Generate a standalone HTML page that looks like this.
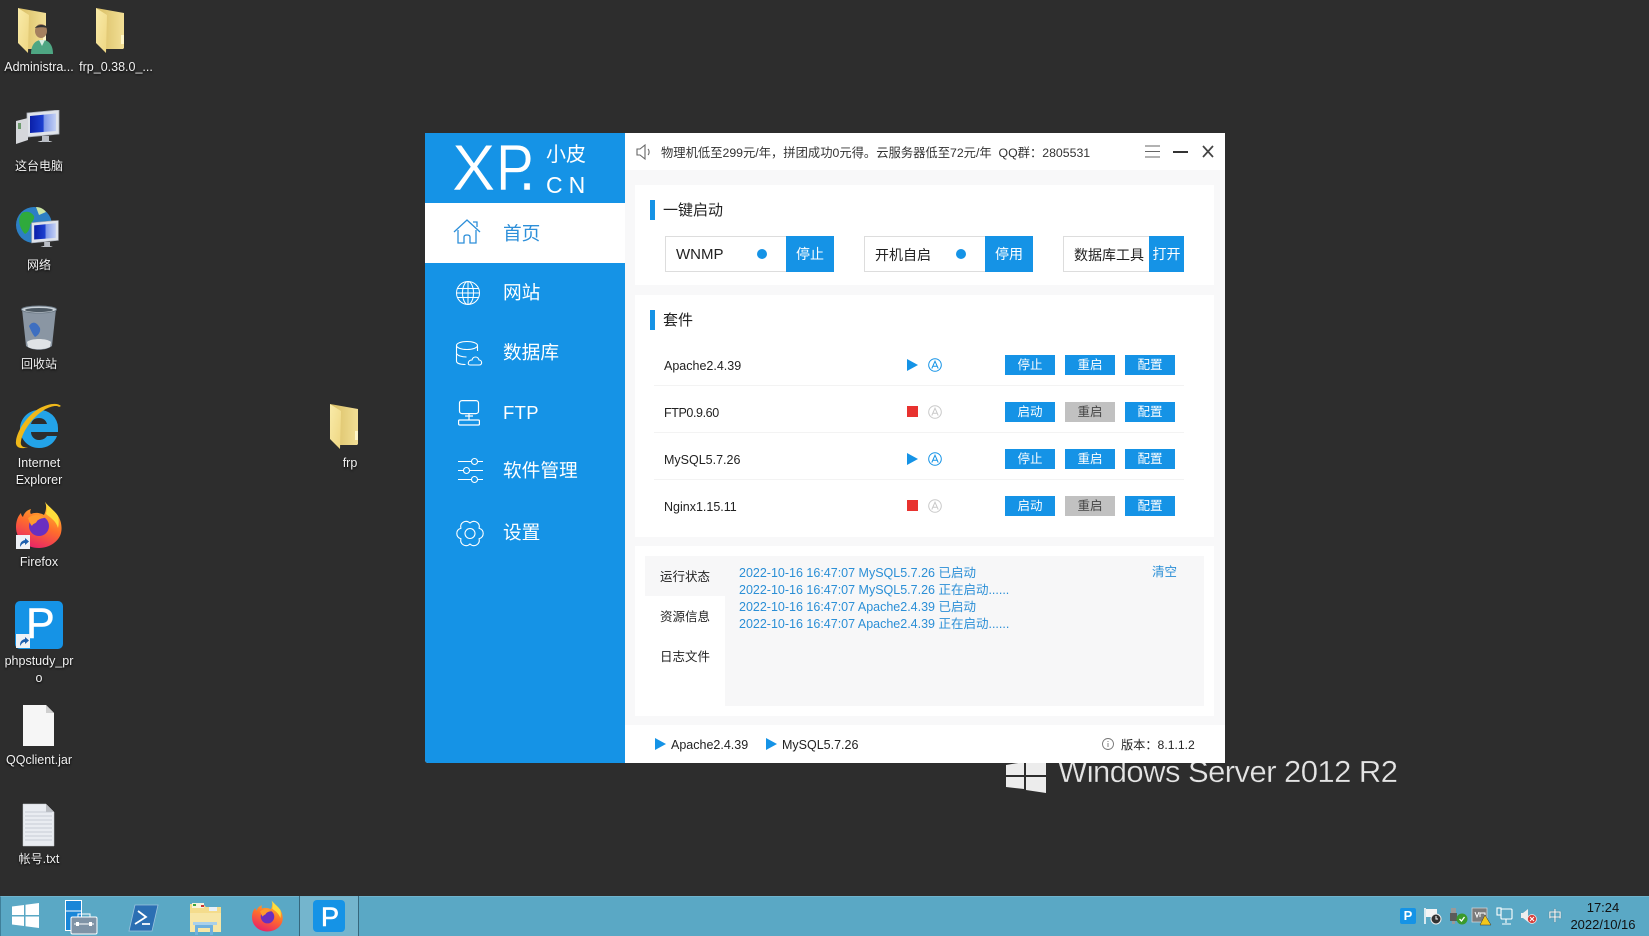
<!DOCTYPE html>
<html><head><meta charset="utf-8"><title>phpstudy</title>
<style>
*{box-sizing:border-box;margin:0;padding:0}
html,body{width:1649px;height:936px;overflow:hidden;background:#2d2d2d}
body{position:relative;font-family:"Liberation Sans","Noto Sans CJK SC",sans-serif;color:#222}
.a{position:absolute}
svg{position:absolute;overflow:visible}
.l{position:absolute;width:90px;text-align:center;color:#f2f2f2;font-size:12.500px;line-height:17px;text-shadow:0 1px 2px #000;white-space:nowrap}
.c{font-size:12px}
#win{position:absolute;left:425px;top:133px;width:800px;height:630px;background:#f8f8f9;overflow:hidden;border-radius:0 0 0 3px}
#side{position:absolute;left:0;top:0;width:200px;height:630px;background:#1593e6}
.nav{position:absolute;left:78px;font-size:18.700px;line-height:26px;color:#fff;white-space:nowrap}
.panel{position:absolute;background:#fff;left:210px;width:579px}
.bar{position:absolute;width:5px;height:20px;background:#1593e6}
.ttl{position:absolute;font-size:15px;line-height:20px;color:#222}
.box{position:absolute;height:36px;background:#fff;border:1px solid #ddd;font-size:14px;line-height:36px;color:#222;white-space:nowrap}
.bb{position:absolute;top:-1px;height:36px;background:#1593e6;color:#fff;text-align:center;font-size:14px;line-height:36px}
.dot{position:absolute;width:10px;height:10px;border-radius:50%;background:#1593e6;top:12px}
.n{position:absolute;left:664px;font-size:12.500px;line-height:20px;color:#222;white-space:nowrap}
.btn{position:absolute;width:50px;height:20px;background:#1593e6;color:#fff;text-align:center;font-size:12.500px;line-height:20px}
.off{background:#c1c1c1;color:#444}
.sep{position:absolute;left:229px;width:530px;height:1px;background:#f3f3f3}
.log{position:absolute;left:739px;font-size:12.500px;line-height:17px;color:#2b8fd6;white-space:nowrap}
.tab{position:absolute;left:645px;width:80px;text-align:center;font-size:12.500px;line-height:20px;color:#222}
.ft{position:absolute;top:735px;font-size:12.500px;line-height:20px;color:#222;white-space:nowrap}
.xp{position:absolute;top:0;font-size:65px;line-height:70px;color:#fff;-webkit-text-stroke:.5px #1593e6;transform-origin:0 0;white-space:nowrap}
</style></head><body>

<svg width="0" height="0" style="position:absolute"><defs>
<linearGradient id="fb" x1="0" y1="0" x2="1" y2="0"><stop offset="0" stop-color="#d8bd62"/><stop offset="1" stop-color="#f2df96"/></linearGradient>
<linearGradient id="fl" x1="0" y1="0" x2="1" y2="1"><stop offset="0" stop-color="#f9eba9"/><stop offset="1" stop-color="#eed682"/></linearGradient>
<linearGradient id="scr" x1="0" y1="0" x2="1" y2="0"><stop offset="0" stop-color="#0a1fa8"/><stop offset=".5" stop-color="#1c3fd0"/><stop offset=".55" stop-color="#7f98e8"/><stop offset="1" stop-color="#c3d0f5"/></linearGradient>
<linearGradient id="fx" x1="0.7" y1="0" x2="0.3" y2="1"><stop offset="0" stop-color="#ffc62e"/><stop offset=".5" stop-color="#ff6d2c"/><stop offset="1" stop-color="#e8206a"/></linearGradient>
<symbol id="folder" viewBox="0 0 30 46"><path d="M0 0L28 5V40L27 41H9L0 33Z" fill="url(#fb)"/><path d="M28 27h-3v9h3z" fill="#fff6c8"/><path d="M0 0L11 7L10 45L0 35Z" fill="url(#fl)"/></symbol>
<symbol id="fox" viewBox="0 0 46 46"><path d="M29 0c3 5 9 8 13 14 4 6 4 13 3 17-2 8-11 15-22 15C10 46 0 37 0 25c0-6 2-11 5-14 0 2 1 3 2 4 1-4 4-7 8-8-1 2-1 4 0 5 4-2 10-1 13 1 2-4 3-9 1-13z" fill="url(#fx)"/><circle cx="23" cy="24" r="10" fill="#6a2fc0"/><path d="M12 16c5-4 12-4 17 0-3 0-6 1-8 3-1 3-4 2-5 5-2-2-3-5-4-8z" fill="#ff9a2e"/><path d="M29 0c4 5 10 9 13 14 1 4 1 8 0 12-2-7-7-10-12-14 1-4 1-8-1-12z" fill="#ffdd3c"/></symbol>
<symbol id="sc" viewBox="0 0 14 14"><rect width="14" height="14" fill="#eef1f6"/><path d="M4 12c0-4 1-6 5-7V3l4 3.500-4 3.500V8c-2 0-3 1-5 4z" fill="#1d5fae"/></symbol>
<symbol id="mon" viewBox="0 0 36 32"><path d="M2 3L34 0V24L2 27Z" fill="#dfe3ea" stroke="#a9aeb7" stroke-width=".8"/><path d="M5 6L31 3.500V21L5 23Z" fill="url(#scr)"/><ellipse cx="20" cy="34" rx="9" ry="3.500" fill="#d0d3d8"/><rect x="17" y="26" width="7" height="7" fill="#b9bdc4"/></symbol>
<symbol id="A" viewBox="0 0 14 14"><circle cx="7" cy="7" r="6.300" fill="none" stroke="currentColor" stroke-width="1"/><path d="M3.800 10.500L7 3.200l3.200 7.300M4.900 8.200h4.200" fill="none" stroke="currentColor" stroke-width="1"/></symbol>
</defs></svg>

<!-- Desktop icons -->
<svg style="left:18px;top:8px" width="30" height="46"><use href="#folder" width="30" height="46"/></svg>
<svg style="left:30px;top:24px" width="24" height="30" viewBox="0 0 24 30"><ellipse cx="11" cy="7" rx="6" ry="7" fill="#a5805f"/><path d="M5 4c2-4 11-4 13 0-4-1-9-1-13 0z" fill="#333"/><path d="M1 30c0-9 4-14 11-14s11 5 11 14z" fill="#4ea683"/><path d="M9 16l3 6 3-6z" fill="#d9ede2"/></svg>
<div class="l" style="left:-6px;top:59px">Administra...</div>
<svg style="left:96px;top:8px" width="30" height="46"><use href="#folder" width="30" height="46"/></svg>
<div class="l" style="left:71px;top:59px">frp_0.38.0_...</div>

<svg style="left:25px;top:110px" width="36" height="32"><use href="#mon" width="36" height="32"/></svg>
<svg style="left:16px;top:118px" width="14" height="26" viewBox="0 0 14 26"><path d="M0 3L12 0V22L0 26Z" fill="#d5d7db"/><rect x="2" y="5" width="3" height="6" fill="#6e9a6e"/></svg>
<div class="l c" style="left:-6px;top:158px">这台电脑</div>

<svg style="left:16px;top:205px" width="36" height="40" viewBox="0 0 36 40"><circle cx="18" cy="20" r="18" fill="#2c7fc4"/><path d="M6 8c6-3 10 0 12 3 1 3-2 6-4 9 0 5-3 8-5 9-4-4-9-14-3-21z" fill="#2faa3c"/><path d="M20 2c4 0 8 2 10 5l-7 3z" fill="#cbe6a5"/></svg>
<svg style="left:30px;top:218px" width="30" height="33" viewBox="0 0 36 34"><use href="#mon" width="36" height="32"/></svg>
<div class="l c" style="left:-6px;top:257px">网络</div>

<svg style="left:21px;top:306px" width="36" height="44" viewBox="0 0 36 44"><path d="M1 3h34l-4 37c-6 5-20 5-26 0z" fill="#8a96a3"/><ellipse cx="18" cy="3.500" rx="17.500" ry="3.500" fill="#c9d1d8" stroke="#6f7c88"/><ellipse cx="18" cy="4" rx="14" ry="2" fill="#4c5862"/><path d="M8 20c4-6 8-3 11 2 1 5-3 8-5 9-2-2-4-6-6-11z" fill="#3e6fc0"/><path d="M6 36c4-4 20-4 24 0l-1 5c-6 3-17 3-22 0z" fill="#dfe3e6"/></svg>
<div class="l c" style="left:-6px;top:356px">回收站</div>

<svg style="left:16px;top:403px" width="46" height="46" viewBox="0 0 46 46"><path d="M23 7a18 18 0 0 1 19 18v4H15c0 4 3 8 8 8 3 0 6-1 8-4h10c-3 8-10 12-18 12C12 45 4 36 4 26S12 7 23 7zM15 21h16c-1-4-4-6-8-6s-7 2-8 6z" fill="#23a3e8"/><path d="M45 3C41-1 32 1 24 5 11 12 1 28 0 38c-1 6 4 9 12 6-5 1-8-1-7-6 2-11 13-25 23-31 7-4 13-5 15-3z" fill="#efb81a"/></svg>
<div class="l" style="left:-6px;top:455px">Internet</div>
<div class="l" style="left:-6px;top:472px">Explorer</div>

<svg style="left:330px;top:404px" width="30" height="46"><use href="#folder" width="30" height="46"/></svg>
<div class="l" style="left:305px;top:455px">frp</div>

<svg style="left:16px;top:502px" width="46" height="46"><use href="#fox" width="46" height="46"/></svg>
<svg style="left:16px;top:535px" width="14" height="14"><use href="#sc" width="14" height="14"/></svg>
<div class="l" style="left:-6px;top:554px">Firefox</div>

<div class="a" style="left:15px;top:601px;width:48px;height:48px;background:#1593e6;border-radius:5px"></div>
<div class="a" style="left:26px;top:599px;color:#fff;font-size:43px;line-height:50px;-webkit-text-stroke:.5px #fff">P</div>
<svg style="left:16px;top:634px" width="14" height="14"><use href="#sc" width="14" height="14"/></svg>
<div class="l" style="left:-6px;top:653px">phpstudy_pr</div>
<div class="l" style="left:-6px;top:670px">o</div>

<svg style="left:23px;top:705px" width="32" height="42" viewBox="0 0 32 42"><path d="M0 0H23L31 8V41H0Z" fill="#f6f6f6"/><path d="M23 0L31 8H23Z" fill="#cfcfcf"/></svg>
<div class="l" style="left:-6px;top:752px">QQclient.jar</div>

<svg style="left:23px;top:804px" width="32" height="42" viewBox="0 0 32 42"><path d="M0 0H23L31 8V42H0Z" fill="#e9ecf1" stroke="#c5c8cd" stroke-width=".5"/><path d="M23 0L31 8H23Z" fill="#b9bcc1"/><path d="M2 8h27M2 12h27M2 16h27M2 20h27M2 24h27M2 28h27M2 32h27M2 36h27" stroke="#bcc2cc" stroke-width=".8"/></svg>
<div class="l" style="left:-6px;top:851px"><span class="c">帐号</span>.txt</div>

<!-- Watermark -->
<svg style="left:1006px;top:760px" width="40" height="33" viewBox="0 0 40 33"><path d="M0 5L18 2V15H0ZM20 2L40 0V15H20ZM0 17H18V29L0 27ZM20 17H40V33L20 30Z" fill="#ececec"/></svg>
<div class="a" style="left:1058px;top:752px;font-size:31px;line-height:40px;color:#e4e4e4;white-space:nowrap;letter-spacing:-.55px;-webkit-text-stroke:.3px #2d2d2d">Windows Server 2012 R2</div>

<!-- Window -->
<div id="win">
  <div id="side">
    <div class="xp" style="left:27px">X</div>
    <div class="xp" style="left:71px;transform:scaleX(.87)">P</div>
    <div class="xp" style="left:93px">.</div>
    <div class="a" style="left:121px;top:9px;font-size:20px;line-height:26px;color:#fff;white-space:nowrap">小皮</div>
    <div class="a" style="left:121px;top:38px;font-size:23px;line-height:28px;color:#fff;letter-spacing:6px;white-space:nowrap">CN</div>
    <div class="a" style="left:0;top:70px;width:200px;height:60px;background:#fff"></div>

    <svg style="left:28px;top:86px" width="28" height="26" viewBox="0 0 28 26" fill="none" stroke="#2d8fd9" stroke-width="1.300"><path d="M1 13L14 1l13 12M5 11v13h6v-6q0-2 3-2t3 2v6h6V11M20 3h4v5"/></svg>
    <div class="nav" style="top:88px;color:#2d8fd9">首页</div>

    <svg style="left:31px;top:148px" width="24" height="24" viewBox="0 0 24 24" fill="none" stroke="#fff" stroke-width="1"><circle cx="12" cy="12" r="11.500"/><ellipse cx="12" cy="12" rx="5.500" ry="11.500"/><path d="M12 .5v23M1.500 7.500h21M.5 12h23M1.500 16.500h21"/></svg>
    <div class="nav" style="top:147px">网站</div>

    <svg style="left:31px;top:208px" width="26" height="25" viewBox="0 0 26 25" fill="none" stroke="#fff" stroke-width="1.100"><ellipse cx="11" cy="4.500" rx="10.500" ry="4"/><path d="M.5 4.500V20c0 2 3 3.500 9 3.500M21.500 4.500V10M.5 12.500c1 2 5 3.500 10 3.500"/><path d="M14 24h9c4 0 3-5 0-5-1-4-6-4-7 0-4 0-5 5-2 5z"/></svg>
    <div class="nav" style="top:207px">数据库</div>

    <svg style="left:33px;top:267px" width="22" height="26" viewBox="0 0 22 26" fill="none" stroke="#fff" stroke-width="1.200"><rect x="1.500" y=".6" width="19" height="13" rx="2.500"/><path d="M11 14v6M7 16h8"/><rect x="0.600" y="20" width="20.800" height="5" rx="1"/></svg>
    <div class="nav" style="top:267px;font-size:18.500px;letter-spacing:.3px">FTP</div>

    <svg style="left:33px;top:325px" width="25" height="25" viewBox="0 0 25 25" fill="none" stroke="#fff" stroke-width="1.100"><path d="M0 3.500h13M20 3.500h5M0 12.500h5M12 12.500h13M0 21.500h13M20 21.500h5"/><circle cx="16.500" cy="3.500" r="3"/><circle cx="8.500" cy="12.500" r="3"/><circle cx="16.500" cy="21.500" r="3"/></svg>
    <div class="nav" style="top:325px">软件管理</div>

    <svg style="left:31px;top:387px" width="28" height="27" viewBox="0 0 28 27" fill="none" stroke="#fff" stroke-width="1.100"><path d="M23.090 8.250C28.550 9.870 28.550 17.130 23.090 18.750C24.420 24.290 18.130 27.920 14 24C9.870 27.920 3.580 24.290 4.910 18.750C-.55 17.130 -.55 9.870 4.910 8.250C3.580 2.710 9.870 -.92 14 3C18.130 -.92 24.420 2.710 23.090 8.250Z"/><circle cx="14" cy="13.500" r="5"/></svg>
    <div class="nav" style="top:387px">设置</div>
  </div>
  <div class="a" style="left:200px;top:0;width:600px;height:37px;background:#fff"></div>
  <div class="a" style="left:200px;top:592px;width:600px;height:38px;background:#fff"></div>
  <div class="panel" style="top:52px;height:100px"></div>
  <div class="panel" style="top:162px;height:242px"></div>
  <div class="panel" style="top:413px;height:170px"></div>
  <div class="a" style="left:220px;top:423px;width:559px;height:150px;background:#f7f7f8"></div>
  <div class="a" style="left:220px;top:463px;width:80px;height:110px;background:#fff"></div>
  <div class="sep" style="top:252px"></div>
  <div class="sep" style="top:299px"></div>
  <div class="sep" style="top:346px"></div>
</div>

<!-- Top bar -->
<svg style="left:636px;top:144px" width="15" height="16" viewBox="0 0 15 16" fill="none" stroke="#666" stroke-width="1.100"><path d="M1 5v6h3l5 4V1L4 5zM12 5c1.500 1.500 1.500 4.500 0 6"/></svg>
<div class="a" style="left:661px;top:144px;font-size:12.300px;line-height:18px;color:#333;white-space:nowrap">物理机低至299元/年，拼团成功0元得。云服务器低至72元/年&nbsp;&nbsp;QQ群：2805531</div>
<svg style="left:1145px;top:145px" width="15" height="13" viewBox="0 0 15 13" stroke="#666" stroke-width="1"><path d="M0 1h15M0 6.500h15M0 12h15"/></svg>
<div class="a" style="left:1173px;top:151px;width:15px;height:2px;background:#333"></div>
<svg style="left:1202px;top:145px" width="12" height="13" viewBox="0 0 12 13" stroke="#444" stroke-width="1.700"><path d="M1 1l10 11M11 1L1 12"/></svg>

<!-- Panel 1 -->
<div class="bar" style="left:650px;top:200px"></div>
<div class="ttl" style="left:663px;top:201px">一键启动</div>
<div class="box" style="left:665px;top:236px;width:169px;padding-left:10px;font-size:15px">WNMP<div class="dot" style="left:91px"></div><div class="bb" style="left:120px;width:48px">停止</div></div>
<div class="box" style="left:864px;top:236px;width:169px;padding-left:10px">开机自启<div class="dot" style="left:91px"></div><div class="bb" style="left:120px;width:48px">停用</div></div>
<div class="box" style="left:1063px;top:236px;width:121px;padding-left:10px">数据库工具<div class="bb" style="left:85px;width:35px">打开</div></div>

<!-- Panel 2 -->
<div class="bar" style="left:650px;top:310px"></div>
<div class="ttl" style="left:663px;top:311px">套件</div>

<div class="n" style="top:356px">Apache2.4.39</div>
<svg style="left:907px;top:359px" width="11" height="12"><path d="M0 0L11 6L0 12Z" fill="#1593e6"/></svg>
<svg style="left:928px;top:358px;color:#1593e6" width="14" height="14"><use href="#A" width="14" height="14"/></svg>
<div class="btn" style="left:1005px;top:355px">停止</div><div class="btn" style="left:1065px;top:355px">重启</div><div class="btn" style="left:1125px;top:355px">配置</div>

<div class="n" style="top:403px;letter-spacing:-.4px">FTP0.9.60</div>
<div class="a" style="left:907px;top:406px;width:11px;height:11px;background:#e8322f"></div>
<svg style="left:928px;top:405px;color:#c9c9c9" width="14" height="14"><use href="#A" width="14" height="14"/></svg>
<div class="btn" style="left:1005px;top:402px">启动</div><div class="btn off" style="left:1065px;top:402px">重启</div><div class="btn" style="left:1125px;top:402px">配置</div>

<div class="n" style="top:450px">MySQL5.7.26</div>
<svg style="left:907px;top:453px" width="11" height="12"><path d="M0 0L11 6L0 12Z" fill="#1593e6"/></svg>
<svg style="left:928px;top:452px;color:#1593e6" width="14" height="14"><use href="#A" width="14" height="14"/></svg>
<div class="btn" style="left:1005px;top:449px">停止</div><div class="btn" style="left:1065px;top:449px">重启</div><div class="btn" style="left:1125px;top:449px">配置</div>

<div class="n" style="top:497px">Nginx1.15.11</div>
<div class="a" style="left:907px;top:500px;width:11px;height:11px;background:#e8322f"></div>
<svg style="left:928px;top:499px;color:#c9c9c9" width="14" height="14"><use href="#A" width="14" height="14"/></svg>
<div class="btn" style="left:1005px;top:496px">启动</div><div class="btn off" style="left:1065px;top:496px">重启</div><div class="btn" style="left:1125px;top:496px">配置</div>

<!-- Panel 3 -->
<div class="tab" style="top:567px">运行状态</div>
<div class="tab" style="top:607px">资源信息</div>
<div class="tab" style="top:647px">日志文件</div>
<div class="log" style="top:565px">2022-10-16 16:47:07 MySQL5.7.26 已启动</div>
<div class="log" style="top:582px">2022-10-16 16:47:07 MySQL5.7.26 正在启动......</div>
<div class="log" style="top:599px">2022-10-16 16:47:07 Apache2.4.39 已启动</div>
<div class="log" style="top:616px">2022-10-16 16:47:07 Apache2.4.39 正在启动......</div>
<div class="log" style="left:1152px;top:564px">清空</div>

<!-- Footer -->
<svg style="left:655px;top:738px" width="11" height="12"><path d="M0 0L11 6L0 12Z" fill="#1593e6"/></svg>
<div class="ft" style="left:671px">Apache2.4.39</div>
<svg style="left:766px;top:738px" width="11" height="12"><path d="M0 0L11 6L0 12Z" fill="#1593e6"/></svg>
<div class="ft" style="left:782px">MySQL5.7.26</div>
<svg style="left:1102px;top:738px" width="12" height="12" viewBox="0 0 12 12" fill="none" stroke="#777" stroke-width=".9"><circle cx="6" cy="6" r="5.500"/><path d="M6 5v4M6 3v1"/></svg>
<div class="ft" style="left:1121px;font-size:12.200px">版本：8.1.1.2</div>

<!-- Taskbar -->
<div class="a" style="left:0;top:896px;width:1649px;height:40px;background:#5aa8c5;border-top:1px solid #6fb3cc;border-left:1px solid #3f7f99"></div>
<div class="a" style="left:299px;top:896px;width:60px;height:40px;background:#74b5cd;border-left:1px solid #36677c;border-right:1px solid #36677c"></div>
<svg style="left:12px;top:903px" width="27" height="25" viewBox="0 0 27 25" fill="#fff"><path d="M0 3.500L12 2V12H0ZM13.500 1.800L27 0V12H13.500ZM0 13.500H12V23L0 21.500ZM13.500 13.500H27V25L13.500 23.200Z"/></svg>
<svg style="left:65px;top:900px" width="33" height="35" viewBox="0 0 33 35"><rect x=".5" y=".5" width="16" height="30" fill="#1a86d8" stroke="#fff"/><path d="M1 11h15" stroke="#fff"/><rect x="6" y="17" width="26" height="17" rx="1.500" fill="#7f93a6" stroke="#fff"/><path d="M13 17v-3h12v3" fill="none" stroke="#fff"/><path d="M9 24h20" stroke="#fff"/><rect x="11" y="22" width="3" height="4" fill="#fff"/><rect x="24" y="22" width="3" height="4" fill="#fff"/></svg>
<svg style="left:129px;top:905px" width="29" height="26" viewBox="0 0 29 26"><path d="M6 0H29L23 26H0Z" fill="#2b6fb3" stroke="#9cc3dd" stroke-width=".8"/><path d="M9 6l8 6-11 7M13 19h8" fill="none" stroke="#fff" stroke-width="1.800"/></svg>
<svg style="left:189px;top:902px" width="32" height="33" viewBox="0 0 32 33"><path d="M1 2h13l3 3h15v25H1z" fill="#f4dc8c"/><rect x="3" y="1" width="12" height="5" fill="#f7f3dc"/><rect x="4" y="2" width="3" height="2" fill="#3ca63c"/><rect x="12" y="3" width="3" height="2" fill="#c33"/><rect x="20" y="5" width="8" height="4" fill="#e8f0f8"/><path d="M1 11h31v19H1z" fill="#f7e6a6"/><path d="M6 33V24q0-2 2-2h14q2 0 2 2v9h-3v-7H9v7z" fill="#6fb0dd"/><rect x="4" y="20" width="24" height="3" fill="#a9d0ea"/></svg>
<svg style="left:252px;top:900px" width="31" height="32"><use href="#fox" width="31" height="32"/></svg>
<div class="a" style="left:313px;top:900px;width:32px;height:32px;background:#1593e6;border-radius:4px"></div>
<div class="a" style="left:321px;top:901px;color:#fff;font-size:27px;line-height:32px;-webkit-text-stroke:.6px #fff">P</div>

<!-- Tray -->
<div class="a" style="left:1400px;top:908px;width:16px;height:16px;background:#1593e6;border-radius:2px;color:#fff;font-size:13px;line-height:16px;text-align:center;font-weight:700">P</div>
<svg style="left:1424px;top:907px" width="18" height="18" viewBox="0 0 18 18"><path d="M1 1v16" stroke="#fff" stroke-width="1.500"/><path d="M2 2h11v8H2z" fill="#f4f4f4"/><circle cx="12" cy="12" r="5" fill="#333" stroke="#eee"/><path d="M12 9v3h2" stroke="#fff" fill="none"/></svg>
<svg style="left:1450px;top:907px" width="18" height="18" viewBox="0 0 18 18"><rect x="1" y="1" width="5" height="5" fill="#9a9a9a"/><rect x="0" y="6" width="7" height="8" fill="#5b5b5b"/><rect x="2" y="14" width="3" height="3" fill="#999"/><circle cx="12" cy="12" r="5.500" fill="#3a9a2c"/><path d="M9.500 12l2 2 3-4" stroke="#fff" fill="none" stroke-width="1.300"/></svg>
<svg style="left:1472px;top:907px" width="20" height="18" viewBox="0 0 20 18"><rect x="0" y="1" width="15" height="14" fill="#7c7c7c" stroke="#ddd" stroke-width=".7"/><path d="M3 5l2 5 2-5M8 10V6h5v4" stroke="#fff" fill="none"/><path d="M13 8l6 10H8z" fill="#f4c81c" stroke="#333" stroke-width=".5"/></svg>
<svg style="left:1496px;top:907px" width="17" height="18" viewBox="0 0 17 18" fill="none" stroke="#fff" stroke-width="1.100"><rect x="5" y="2" width="11" height="10" rx="1"/><path d="M10 12v4M6 17h9"/><rect x="1" y="1" width="4" height="7" fill="#5aa8c5"/></svg>
<svg style="left:1520px;top:907px" width="18" height="18" viewBox="0 0 18 18"><path d="M1 6v5h2l5 4V2L3 6z" fill="#eee"/><circle cx="12" cy="12" r="4.500" fill="#d8403c" stroke="#eee" stroke-width=".7"/><path d="M10 10l4 4M14 10l-4 4" stroke="#fff"/></svg>
<div class="a" style="left:1548px;top:906px;font-size:14px;line-height:20px;color:#fff;text-shadow:0 0 1px #333">中</div>
<div class="a" style="left:1563px;top:899px;width:80px;text-align:center;font-size:13px;line-height:18px;color:#111">17:24</div>
<div class="a" style="left:1563px;top:916px;width:80px;text-align:center;font-size:13px;line-height:18px;color:#111">2022/10/16</div>
</body></html>
